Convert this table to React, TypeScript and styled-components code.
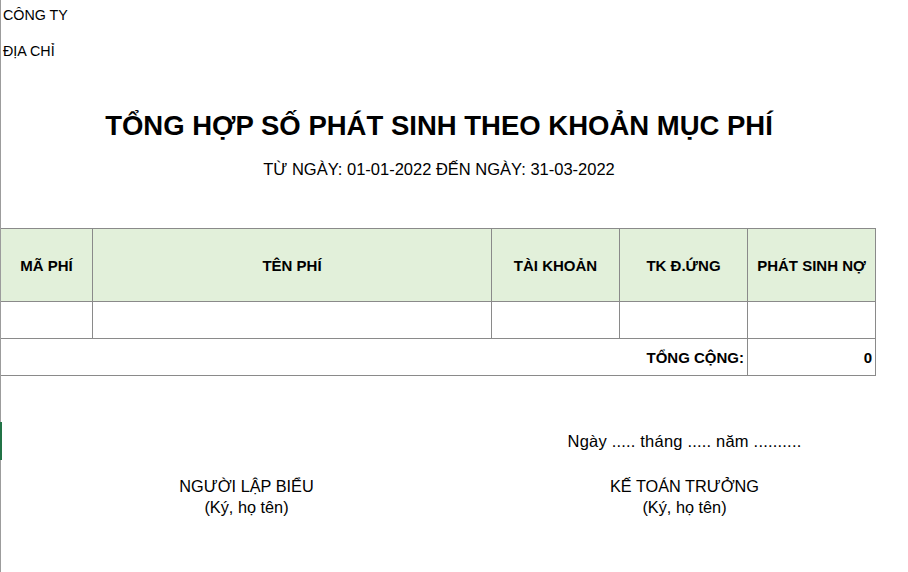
import React from "react";
import styled, { createGlobalStyle } from "styled-components";

const GlobalStyle = createGlobalStyle`
  html, body {
    margin: 0;
    padding: 0;
    background: #ffffff;
  }
  body {
    font-family: "Liberation Sans", Arial, sans-serif;
    color: #000000;
  }
`;

type Row = {
  code: string;
  name: string;
  account: string;
  contra: string;
  debit: string;
};

const rows: Row[] = [{ code: "", name: "", account: "", contra: "", debit: "" }];

const columns = ["MÃ PHÍ", "TÊN PHÍ", "TÀI KHOẢN", "TK Đ.ỨNG", "PHÁT SINH NỢ"];

const App = () => {
  return (
    <>
      <GlobalStyle />
      <Sheet>
        <SelectionMark />
        <Info>
          <InfoLine>CÔNG TY</InfoLine>
          <InfoLine>ĐỊA CHỈ</InfoLine>
        </Info>

        <Title>TỔNG HỢP SỐ PHÁT SINH THEO KHOẢN MỤC PHÍ</Title>
        <Period>TỪ NGÀY: 01-01-2022 ĐẾN NGÀY: 31-03-2022</Period>

        <Grid>
          {columns.map((c) => (
            <HeadCell key={c}>{c}</HeadCell>
          ))}
          {rows.map((r, i) => (
            <React.Fragment key={i}>
              <Cell>{r.code}</Cell>
              <Cell>{r.name}</Cell>
              <Cell>{r.account}</Cell>
              <Cell>{r.contra}</Cell>
              <Cell $align="right">{r.debit}</Cell>
            </React.Fragment>
          ))}
          <TotalLabel>TỔNG CỘNG:</TotalLabel>
          <Cell $align="right" $bold>
            0
          </Cell>
        </Grid>

        <Signatures>
          <span />
          <DateLine>Ngày ..... tháng ..... năm ..........</DateLine>
          <Signer>
            NGƯỜI LẬP BIỂU
            <br />
            (Ký, họ tên)
          </Signer>
          <Signer>
            KẾ TOÁN TRƯỞNG
            <br />
            (Ký, họ tên)
          </Signer>
        </Signatures>
      </Sheet>
    </>
  );
};

const Sheet = styled.div`
  position: relative;
  width: 907px;
  min-height: 572px;
  border-left: 1px solid #9c9c9c;
`;

const SelectionMark = styled.div`
  position: absolute;
  left: -1px;
  top: 422px;
  width: 2px;
  height: 38px;
  background: #217346;
`;

const Info = styled.div`
  display: flex;
  flex-direction: column;
  gap: 6px;
  padding-left: 2px;
`;

const InfoLine = styled.div`
  height: 30px;
  line-height: 30px;
  font-size: 14.3px;
`;

const Title = styled.h1`
  width: 876px;
  margin: 40px 0 0;
  line-height: 40px;
  font-size: 27.5px;
  font-weight: bold;
  text-align: center;
`;

const Period = styled.div`
  width: 876px;
  margin-top: 11px;
  line-height: 24px;
  font-size: 16.5px;
  text-align: center;
`;

const Grid = styled.div`
  display: grid;
  grid-template-columns: 92px 399px 128px 128px 128px;
  grid-template-rows: 73px 37px 37px;
  width: max-content;
  margin-top: 47px;
  border-top: 1px solid #8a8a8a;
`;

const Cell = styled.div<{ $align?: "left" | "center" | "right"; $bold?: boolean }>`
  box-sizing: border-box;
  display: flex;
  align-items: center;
  justify-content: ${(p) =>
    p.$align === "right" ? "flex-end" : p.$align === "center" ? "center" : "flex-start"};
  padding: 0 3px;
  border-right: 1px solid #8a8a8a;
  border-bottom: 1px solid #8a8a8a;
  font-size: 15px;
  font-weight: ${(p) => (p.$bold ? "bold" : "normal")};
`;

const HeadCell = styled(Cell).attrs({ $align: "center" as const, $bold: true })`
  background: #e2f0da;
`;

const TotalLabel = styled(Cell).attrs({ $align: "right" as const, $bold: true })`
  grid-column: 1 / span 4;
`;

const Signatures = styled.div`
  display: grid;
  grid-template-columns: 491px 385px;
  row-gap: 24px;
  margin-top: 54px;
  font-size: 16.3px;
  text-align: center;
`;

const DateLine = styled.div`
  line-height: 22px;
  font-size: 16.5px;
  letter-spacing: 0.2px;
`;

const Signer = styled.div`
  line-height: 21px;
`;

export default App;
